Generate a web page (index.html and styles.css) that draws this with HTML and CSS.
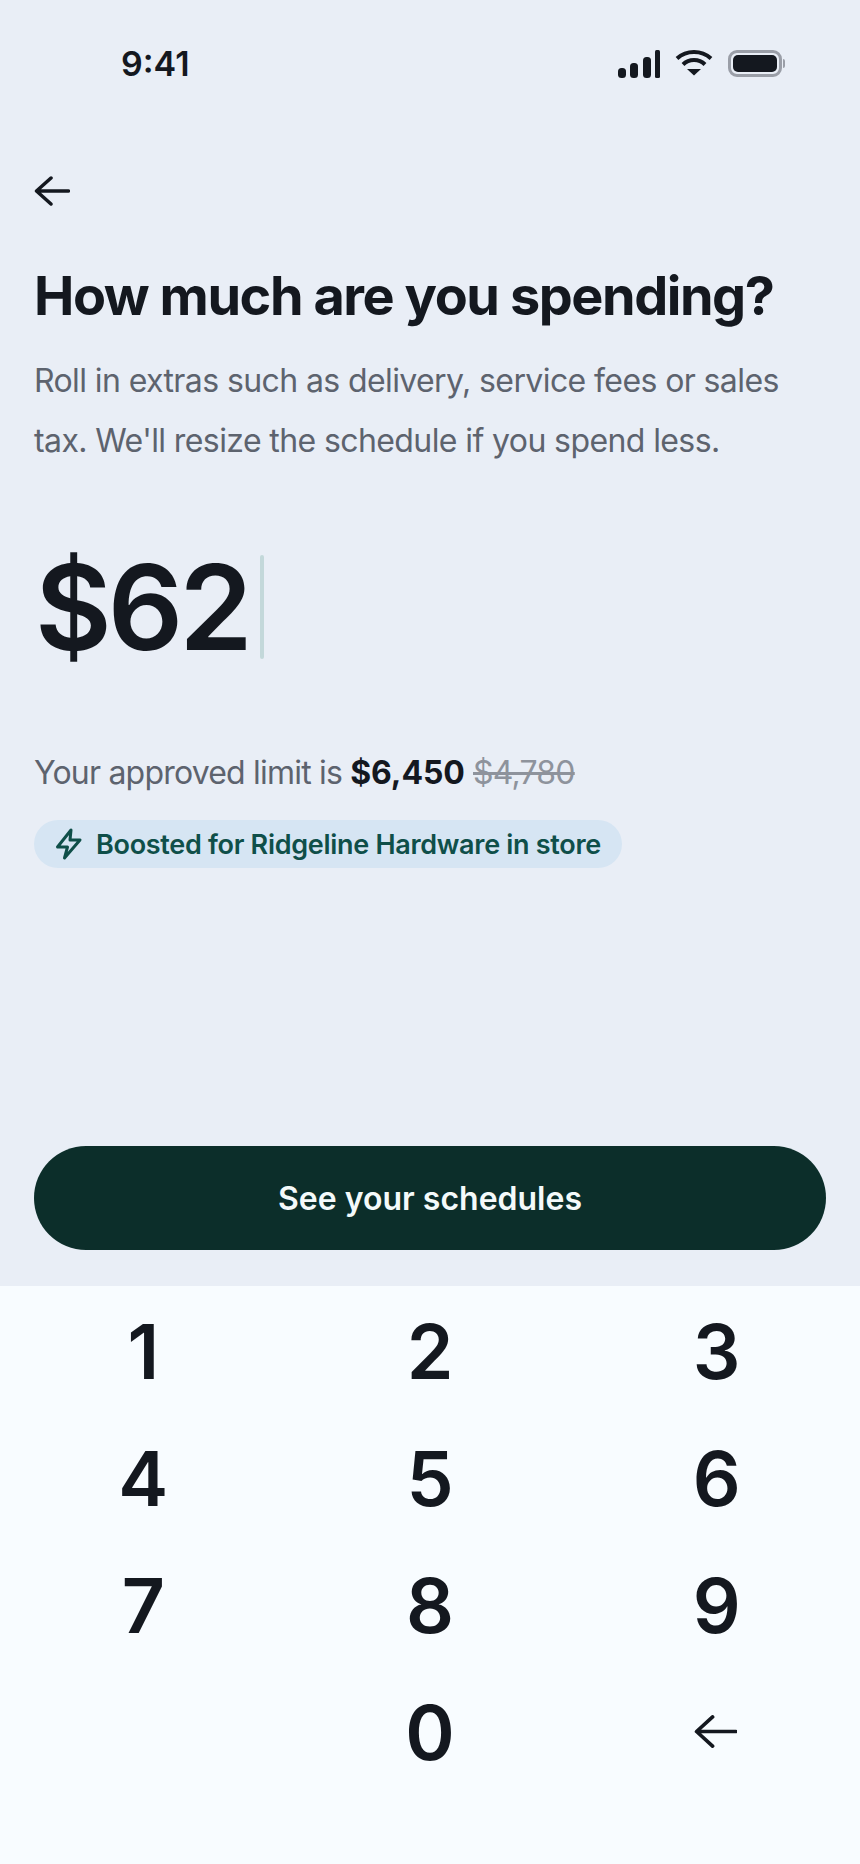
FILE: index.html
```html
<!DOCTYPE html>
<html lang="en">
<head>
    <meta charset="UTF-8">
    <title>How much are you spending?</title>
    <link rel="stylesheet" href="styles.css">
</head>
<body>
    <div class="screen">
        <div class="top">
            <div class="status">
                <span class="clock">9:41</span>
                <div class="status-icons">
                    <svg width="42" height="28" viewBox="0 0 42 28">
                        <rect x="0" y="18" width="8" height="10" rx="3.5" fill="#14181f"/>
                        <rect x="12" y="13" width="8" height="15" rx="3.5" fill="#14181f"/>
                        <rect x="25" y="7" width="8" height="21" rx="3.5" fill="#14181f"/>
                        <rect x="37" y="0" width="5" height="28" rx="1.5" fill="#14181f"/>
                    </svg>
                    <svg width="38" height="26" viewBox="0 0 38 26">
                        <path d="M2 8.500 C7 4 12 2 19 2 C26 2 31 4 36 8.500" fill="none" stroke="#14181f" stroke-width="4"/>
                        <path d="M8 14.500 C11 11.500 15 10 19 10 C23 10 27 11.500 30 14.500" fill="none" stroke="#14181f" stroke-width="4"/>
                        <path d="M12 19 L26 19 L19 25.500 Z" fill="#14181f"/>
                    </svg>
                    <div class="battery"><div class="battery-fill"></div></div>
                </div>
            </div>

            <button class="back">
                <svg width="36" height="30" viewBox="0 0 36 30">
                    <path d="M34.500 15 H3 M17 2 L2.500 15 L17 28" fill="none" stroke="#14181f" stroke-width="3.500" stroke-linecap="round" stroke-linejoin="round"/>
                </svg>
            </button>

            <h1 class="title">How much are you spending?</h1>
            <p class="intro">Roll in extras such as delivery, service fees or sales tax. We'll resize the schedule if you spend less.</p>

            <div class="amount">
                <span>$62</span>
                <div class="caret"></div>
            </div>

            <p class="limit">Your approved limit is <b>$6,450</b> <s>$4,780</s></p>

            <div class="boost">
                <svg width="28" height="32" viewBox="0 0 28 32">
                    <path d="M16 2 L2.500 19 H12.500 L9.500 30 L25 12 H15 Z" fill="none" stroke="#0f4f49" stroke-width="3" stroke-linejoin="round"/>
                </svg>
                <span>Boosted for Ridgeline Hardware in store</span>
            </div>

            <button class="cta">See your schedules</button>
        </div>

        <div class="keypad">
            <button class="key">1</button>
            <button class="key">2</button>
            <button class="key">3</button>
            <button class="key">4</button>
            <button class="key">5</button>
            <button class="key">6</button>
            <button class="key">7</button>
            <button class="key">8</button>
            <button class="key">9</button>
            <div class="key"></div>
            <button class="key">0</button>
            <button class="key">
                <svg class="key-back" width="44" height="34" viewBox="0 0 44 34">
                    <path d="M43 17 H3 M19 2 L2.500 17 L19 32" fill="none" stroke="#14181f" stroke-width="3.800" stroke-linecap="round" stroke-linejoin="round"/>
                </svg>
            </button>
        </div>
    </div>
</body>
</html>
```

FILE: styles.css
```css
*{
    box-sizing: border-box;
}
body{
    margin: 0;
    background: #e9eef6;
    font-family: Inter, "Liberation Sans", sans-serif;
    color: #14181f;
}
button{
    border: 0;
    background: none;
    padding: 0;
    font-family: inherit;
    color: inherit;
}
.screen{
    width: 860px;
    height: 1864px;
    display: flex;
    flex-direction: column;
    overflow: hidden;
}
.top{
    height: 1286px;
    padding: 0 34px;
    display: flex;
    flex-direction: column;
    align-items: flex-start;
}
.status{
    width: 100%;
    height: 128px;
    padding: 44px 0 0 87px;
    display: flex;
    justify-content: space-between;
    align-items: flex-start;
}
.clock{
    font-size: 34px;
    line-height: 40px;
    font-weight: 600;
}
.status-icons{
    display: flex;
    align-items: flex-start;
    gap: 15px;
    padding: 6px 44px 0 0;
}
.battery{
    position: relative;
    width: 54px;
    height: 27px;
    border: 3px solid #9a9ea7;
    border-radius: 9px;
    padding: 2px;
}
.battery::after{
    content: "";
    position: absolute;
    top: 6px;
    right: -6px;
    width: 2px;
    height: 9px;
    background: #9a9ea7;
    border-radius: 0 2px 2px 0;
}
.battery-fill{
    height: 100%;
    background: #14181f;
    border-radius: 5px;
}
.back{
    height: 30px;
    margin-top: 48px;
    display: block;
}
.title{
    margin: 57px 0 0;
    font-size: 54px;
    line-height: 66px;
    font-weight: 700;
    letter-spacing: -1.45px;
    white-space: nowrap;
}
.intro{
    margin: 22px 0 0;
    width: 780px;
    font-size: 32px;
    line-height: 60px;
    letter-spacing: -0.6px;
    color: #5d636e;
}
.amount{
    margin: 84px 0 0 1px;
    display: flex;
    align-items: center;
    gap: 11px;
    height: 104px;
    font-size: 118px;
    font-weight: 600;
    letter-spacing: -4px;
}
.caret{
    width: 4px;
    height: 104px;
    background: #c3d8da;
    border-radius: 2px;
}
.limit{
    margin: 94px 0 0;
    font-size: 32px;
    line-height: 40px;
    letter-spacing: -0.8px;
    color: #5d636e;
}
.limit b{
    font-weight: 700;
    letter-spacing: -0.1px;
    color: #14181f;
}
.limit s{
    color: #8e939c;
}
.boost{
    margin-top: 27px;
    height: 48px;
    padding: 0 21px 0 21px;
    display: flex;
    align-items: center;
    gap: 13px;
    background: #d6e5f3;
    border-radius: 24px;
    font-size: 27px;
    font-weight: 600;
    letter-spacing: -0.3px;
    color: #0f4f49;
}
.cta{
    margin-top: auto;
    margin-bottom: 36px;
    width: 792px;
    height: 104px;
    background: #0c2e2a;
    border-radius: 52px;
    color: #f4fafa;
    font-size: 32px;
    font-weight: 600;
}
.keypad{
    flex: 1;
    background: #f8fcff;
    padding-top: 2px;
    display: grid;
    grid-template-columns: repeat(3, 1fr);
    grid-auto-rows: 127px;
}
.key{
    display: flex;
    align-items: center;
    justify-content: center;
    font-size: 75px;
    font-weight: 600;
}
.key-back{
    width: 43px;
    height: 33px;
    margin: 0 2px 2px 0;
}
```
